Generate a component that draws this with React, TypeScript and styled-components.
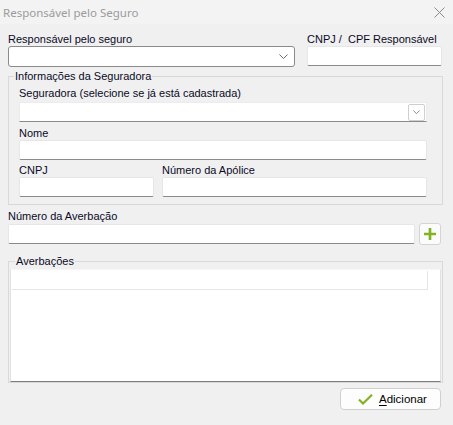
import styled, { createGlobalStyle } from "styled-components";

const GlobalStyle = createGlobalStyle`
  html, body {
    margin: 0;
    padding: 0;
    background: #f0f0f0;
  }
  body {
    font-family: "Liberation Sans", Arial, sans-serif;
  }
  * {
    box-sizing: border-box;
  }
`;

function ChevronDown({ size = 9 }: { size?: number }) {
  return (
    <svg width={size} height={size / 2 + 1} viewBox="0 0 10 6">
      <polyline
        points="0.5,0.5 5,5 9.5,0.5"
        fill="none"
        stroke="#5a5a5a"
        strokeWidth="1"
      />
    </svg>
  );
}

function App() {
  return (
    <Window>
      <GlobalStyle />
      <TitleBar>
        <Title>Responsável pelo Seguro</Title>
        <CloseButton>
          <svg width="11" height="11" viewBox="0 0 11 11">
            <path d="M0.5 0.5 L10.5 10.5 M10.5 0.5 L0.5 10.5" stroke="#8a8a8a" strokeWidth="1" />
          </svg>
        </CloseButton>
      </TitleBar>

      <Body>
        <TopRow>
          <Field>
            <Label>Responsável pelo seguro</Label>
            <ComboBox>
              <ChevronDown />
            </ComboBox>
          </Field>
          <Field>
            <Label>CNPJ /&nbsp; CPF Responsável</Label>
            <TextBox />
          </Field>
        </TopRow>

        <GroupBox $inset={10}>
          <Legend $shift={-5}>Informações da Seguradora</Legend>
          <Field>
            <Label>Seguradora (selecione se já está cadastrada)</Label>
            <FlatCombo>
              <DropButton>
                <ChevronDown size={7} />
              </DropButton>
            </FlatCombo>
          </Field>
          <Field $gap={4}>
            <Label>Nome</Label>
            <TextBox />
          </Field>
          <SplitRow>
            <Field>
              <Label>CNPJ</Label>
              <TextBox />
            </Field>
            <Field>
              <Label>Número da Apólice</Label>
              <TextBox />
            </Field>
          </SplitRow>
        </GroupBox>

        <Field $gap={4}>
          <Label>Número da Averbação</Label>
          <InputRow>
            <TextBox />
            <IconButton>
              <svg width="12" height="12" viewBox="0 0 12 12">
                <path d="M6 0 V12 M0 6 H12" stroke="#7fb321" strokeWidth="2.6" />
              </svg>
            </IconButton>
          </InputRow>
        </Field>

        <GroupBox $inset={1} $gap={9}>
          <Legend $shift={5}>Averbações</Legend>
          <ListView>
            <ListHeader />
          </ListView>
        </GroupBox>

        <Footer>
          <ActionButton>
            <svg width="15" height="11" viewBox="0 0 15 11">
              <polyline
                points="1,5.5 5,9.5 14,0.8"
                fill="none"
                stroke="#7fb321"
                strokeWidth="2.2"
              />
            </svg>
            <span>
              <u>A</u>dicionar
            </span>
          </ActionButton>
        </Footer>
      </Body>
    </Window>
  );
}

export default App;

const Window = styled.div`
  width: 453px;
  height: 425px;
  background: #f0f0f0;
  display: flex;
  flex-direction: column;
  overflow: hidden;
`;

const TitleBar = styled.div`
  height: 24px;
  flex: none;
  background: #f3f3f3;
  display: flex;
  align-items: center;
  justify-content: space-between;
  padding: 0 8px 0 3px;
`;

const Title = styled.span`
  font-family: "Noto Sans", "Open Sans", sans-serif;
  font-size: 11.5px;
  color: #9b9b9b;
`;

const CloseButton = styled.div`
  width: 11px;
  height: 11px;
  display: flex;
`;

const Body = styled.div`
  display: flex;
  flex-direction: column;
  padding: 8px 10px 0 8px;
`;

const TopRow = styled.div`
  display: grid;
  grid-template-columns: 287px 135px;
  column-gap: 12px;
`;

const SplitRow = styled.div`
  display: grid;
  grid-template-columns: 135px 265px;
  column-gap: 8px;
  margin-top: 3px;
`;

const Field = styled.div<{ $gap?: number }>`
  display: flex;
  flex-direction: column;
  margin-top: ${(p) => p.$gap ?? 0}px;
`;

const Label = styled.label`
  font-size: 11px;
  line-height: 14px;
  height: 14px;
  color: #0a0a26;
  white-space: nowrap;
`;

const TextBox = styled.div`
  height: 20px;
  background: #ffffff;
  border: 1px solid #e6e6e6;
  border-bottom-color: #8a8a8a;
  border-radius: 2px;
`;

const ComboBox = styled.div`
  height: 21px;
  background: #ffffff;
  border: 1px solid #8a8a8a;
  border-radius: 3px;
  display: flex;
  align-items: center;
  justify-content: flex-end;
  padding-right: 6px;
`;

const FlatCombo = styled.div`
  height: 20px;
  margin-top: 2px;
  background: #ffffff;
  border: 1px solid #ececec;
  border-bottom-color: #8a8a8a;
  display: flex;
  align-items: center;
  justify-content: flex-end;
  padding-right: 1px;
`;

const DropButton = styled.div`
  width: 17px;
  height: 17px;
  border: 1px solid #cfcfcf;
  border-radius: 2px;
  background: #ffffff;
  display: flex;
  align-items: center;
  justify-content: center;
`;

const GroupBox = styled.fieldset<{ $inset: number; $gap?: number }>`
  margin: ${(p) => p.$gap ?? 2}px 0 0 0;
  padding: 3px ${(p) => (p.$inset === 1 ? 1 : 15)}px ${(p) => (p.$inset === 1 ? 0 : 7)}px ${(p) => p.$inset}px;
  border: 1px solid #d9d9d9;
  min-width: 0;
  display: flex;
  flex-direction: column;
`;

const Legend = styled.legend<{ $shift: number }>`
  font-size: 11px;
  line-height: 14px;
  color: #0a0a26;
  padding: 0 1px;
  margin-left: ${(p) => p.$shift}px;
`;

const InputRow = styled.div`
  display: flex;
  align-items: center;
  gap: 4px;
  margin-right: 2px;

  & > ${TextBox} {
    flex: 1;
  }
`;

const IconButton = styled.div`
  width: 22px;
  height: 22px;
  flex: none;
  border: 1px solid #d4d4d4;
  border-radius: 3px;
  background: #fbfbfb;
  display: flex;
  align-items: center;
  justify-content: center;
`;

const ListView = styled.div`
  height: 113px;
  margin-top: -2px;
  background: #ffffff;
  border: 1px solid #e2e2e2;
  border-top-color: #f6f6f6;
  border-bottom-color: #7d7d7d;
  padding: 1px 0 0 1px;
`;

const ListHeader = styled.div`
  width: 416px;
  height: 19px;
  border-right: 1px solid #e5e5e5;
  border-bottom: 1px solid #e5e5e5;
`;

const Footer = styled.div`
  display: flex;
  justify-content: flex-end;
  padding: 5px 2px 0 0;
`;

const ActionButton = styled.button`
  width: 101px;
  height: 22px;
  border: 1px solid #d0d0d0;
  border-radius: 4px;
  background: #fdfdfd;
  display: flex;
  align-items: center;
  gap: 6px;
  padding: 0 0 0 17px;
  font-family: "Liberation Sans", Arial, sans-serif;
  font-size: 11.5px;
  color: #000000;

  u {
    text-underline-offset: 2px;
  }
`;
